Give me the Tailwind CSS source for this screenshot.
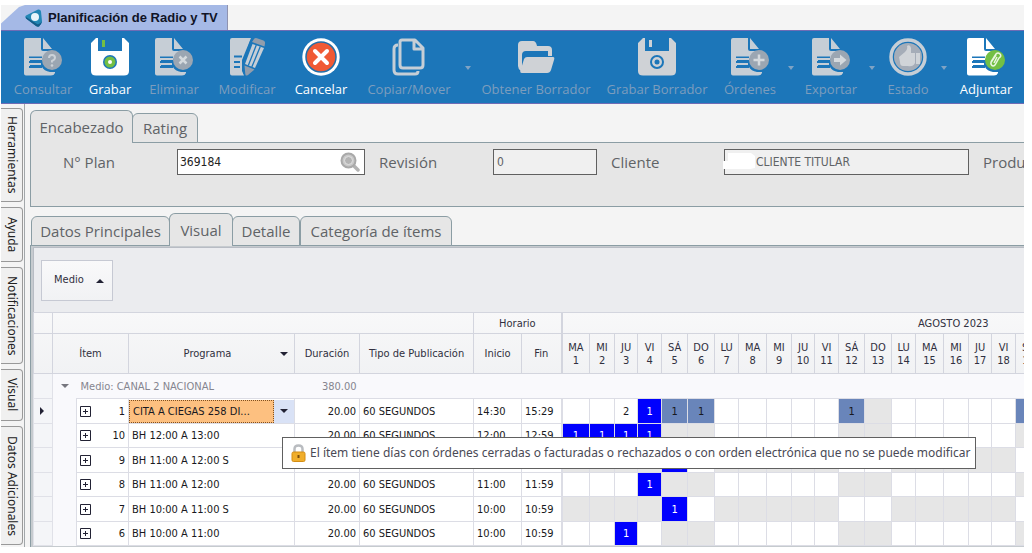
<!DOCTYPE html>
<html lang="es">
<head>
<meta charset="utf-8">
<title>Planificación de Radio y TV</title>
<script src="https://cdn.jsdelivr.net/npm/@tailwindcss/browser@4"></script>
</head>
<body class="bg-white overflow-hidden font-['Open_Sans','Noto_Sans',sans-serif]">
<svg class="hidden">
  <symbol id="doc" viewBox="0 0 38 38">
    <path fill="currentColor" d="M0 2Q0 0 2 0H17V11Q17 13 19 13H28V16Q18 19 18 22H6V24H17V27H6V29H18Q20 33 26 34H31V35Q30 37.500 27 37.500H2Q0 37.500 0 35.500ZM19 0 28 11H19Z"/>
    <path fill="#1c76b9" d="M5 18.500H18V20H5ZM5 23H17V25H5ZM5 28H18V30H5Z"/>
  </symbol>
</svg>
<div class="flex min-h-screen flex-col pt-[5px] pr-2 pb-1.5 pl-px">
  <nav class="flex h-[25px] shrink-0 bg-[#f4f4f4]" aria-label="Documentos">
    <button class="flex w-[227px] items-center gap-1.5 border-r border-[#8f93b0] bg-[#a5b9e6] pl-6 [clip-path:polygon(0_100%,0_74%,18px_8%,24px_0,100%_0,100%_100%)]">
      <svg class="h-[18px] w-[17px] shrink-0" viewBox="0 0 17 18"><path fill="#2387b5" d="M1 6.500 13 .5Q15.500 0 16 2.500L17 12Q17 14 16 15L14 17.500Q12.500 18 11 17L1 9.500Q-.5 8 1 6.500Z"/><path fill="#145b88" d="M1 8 12 15Q15 16 17 12L16 15 14 17.500Q12.500 18 11 17L1 9.500Z"/><circle cx="10" cy="8" r="4" fill="#e8f5fb"/></svg>
      <span class="font-['Liberation_Sans',sans-serif] text-[13px] leading-4 font-bold whitespace-nowrap text-[#101426]">Planificación de Radio y TV</span>
    </button>
  </nav>

  <div class="flex h-[74px] shrink-0 overflow-hidden border-y border-[#6f6cb5] bg-[#1c76b9] pt-[7px] pl-2 text-[13px] leading-[18px] whitespace-nowrap text-[#7c9dbd]" role="toolbar">
    <button class="flex w-[68px] shrink-0 flex-col items-center gap-1" disabled>
      <svg class="h-[38px] w-[38px] text-[#c6ced6]" viewBox="0 0 38 38"><use href="#doc" width="38" height="38"/><circle cx="28" cy="22" r="10" fill="#9ba6b2"/><path d="M25 20Q25 17 28 17T31 20Q31 21.500 28 23V24.500" fill="none" stroke="#ccd2d8" stroke-width="2"/><circle cx="28" cy="27.500" r="1.300" fill="#ccd2d8"/></svg>
      <span>Consultar</span></button>
    <button class="flex w-[66px] shrink-0 flex-col items-center gap-1 text-white">
      <svg class="h-[38px] w-[38px]" viewBox="0 0 38 38"><path fill="#fff" d="M5 0H7V13H31V0H33L38 5V33Q38 37.500 33 37.500H5Q0 37.500 0 33V5Z"/><path fill="#73bf44" d="M11 2H14V9H11Z"/><circle cx="19" cy="24" r="7" fill="#1c76b9"/><circle cx="19" cy="24" r="5.500" fill="#73bf44"/><circle cx="19" cy="24" r="2" fill="#fff"/></svg>
      <span>Grabar</span></button>
    <button class="flex w-[62px] shrink-0 flex-col items-center gap-1" disabled>
      <svg class="h-[38px] w-[38px] text-[#c6ced6]" viewBox="0 0 38 38"><use href="#doc" width="38" height="38"/><circle cx="28" cy="22" r="10" fill="#9ba6b2"/><path d="M24.500 18.500 31.500 25.500M31.500 18.500 24.500 25.500" stroke="#d5dade" stroke-width="2.500"/></svg>
      <span>Eliminar</span></button>
    <button class="flex w-[84px] shrink-0 flex-col items-center gap-1" disabled>
      <svg class="h-[38px] w-[38px]" viewBox="0 0 38 38"><path fill="#c6ced6" d="M2 2Q2 0 4 0H23L14 22V33L16 37.500H4Q2 37.500 2 35.500Z"/><path stroke="#1c76b9" stroke-width="2" d="M6 18.500H14M6 24H12M6 29H12"/><path fill="#1c76b9" d="M22 3 38 9 27 33 18 38 15 35 15 24Z"/><path fill="#c6ced6" d="M24.500 6 36 10 27 30 17 26Z"/><path stroke="#1c76b9" stroke-width="1.300" d="M28.300 7 20.300 27.500M32.300 8.500 23.800 29"/><path fill="#929dac" d="M24 4 26 1Q27-.3 29 .2L35.500 2.500Q37.500 3.500 37 5.500L36.500 8.500ZM16.500 27.500 26.500 31.500 20 37Q17.500 38.500 17.300 36Z"/></svg>
      <span>Modificar</span></button>
    <button class="flex w-[64px] shrink-0 flex-col items-center gap-1 text-white">
      <svg class="h-[38px] w-[38px]" viewBox="0 0 38 38"><circle cx="19" cy="19" r="18.700" fill="#fff"/><circle cx="19" cy="19" r="15" fill="#f05a35" stroke="#226ea9" stroke-width="1.500"/><path d="M13 13 25 25M25 13 13 25" stroke="#fff" stroke-width="4" stroke-linecap="round"/></svg>
      <span>Cancelar</span></button>
    <button class="flex w-[112px] shrink-0 flex-col items-center gap-1" disabled>
      <svg class="h-[38px] w-[38px]" viewBox="0 0 38 38" fill="none" stroke="#c6ced6" stroke-width="3" stroke-linejoin="round"><path d="M12 2H25L33 10V27Q33 30 30 30H13Q10 30 10 27V4Q10 2 12 2ZM24 2V11H33"/><path d="M8 7Q4 7 4 11V32Q4 36 8 36H25Q28 36 28 33"/></svg>
      <span>Copiar/Mover</span></button>
    <button class="flex w-1.5 shrink-0 justify-center pt-7" disabled aria-label="Opciones de copiar"><svg class="h-1 w-1.5 shrink-0" viewBox="0 0 6 4"><path fill="#7fa3c4" d="M0 0H6L3 4Z"/></svg></button>
    <button class="flex w-[130px] shrink-0 flex-col items-center gap-1" disabled>
      <svg class="h-[38px] w-[38px]" viewBox="0 0 38 38"><path fill="#cfd2d6" d="M1 7Q1 3 5 3H16Q19 3 20 8H31Q35 8 35 12V18H31V13H9Q5 13 5 17V30L4 33Q1 31 1 28Z"/><path fill="#cfd2d6" d="M10 19H36Q38 19 37 22L34 32Q33 35 30 35H5Q2 35 4 31L7 21Q8 19 10 19Z"/></svg>
      <span>Obtener Borrador</span></button>
    <button class="flex w-[112px] shrink-0 flex-col items-center gap-1" disabled>
      <svg class="h-[38px] w-[38px]" viewBox="0 0 38 38"><path fill="#cfd2d6" d="M5 0H7V13H31V0H33L38 5V33Q38 37.500 33 37.500H5Q0 37.500 0 33V5ZM11 2H14V9H11Z"/><circle cx="19" cy="24" r="6" fill="none" stroke="#1c76b9" stroke-width="2"/><circle cx="19" cy="24" r="2.500" fill="#1c76b9"/></svg>
      <span>Grabar Borrador</span></button>
    <button class="flex w-[74px] shrink-0 flex-col items-center gap-1" disabled>
      <svg class="h-[38px] w-[38px] text-[#c6ced6]" viewBox="0 0 38 38"><use href="#doc" width="38" height="38"/><circle cx="28" cy="22" r="10" fill="#9ba6b2"/><path d="M28 16.500V27.500M22.500 22H33.500" stroke="#d5dade" stroke-width="2.500"/></svg>
      <span>Órdenes</span></button>
    <button class="flex w-2 shrink-0 justify-center pt-7" disabled aria-label="Opciones de órdenes"><svg class="h-1 w-1.5 shrink-0" viewBox="0 0 6 4"><path fill="#7fa3c4" d="M0 0H6L3 4Z"/></svg></button>
    <button class="flex w-[72px] shrink-0 flex-col items-center gap-1" disabled>
      <svg class="h-[38px] w-[38px] text-[#c6ced6]" viewBox="0 0 38 38"><use href="#doc" width="38" height="38"/><circle cx="28" cy="22" r="10" fill="#9ba6b2"/><path fill="#d5dade" d="M22 20H28V16.500L34.500 22 28 27.500V24H22Z"/></svg>
      <span>Exportar</span></button>
    <button class="flex w-2.5 shrink-0 justify-center pt-7" disabled aria-label="Opciones de exportar"><svg class="h-1 w-1.5 shrink-0" viewBox="0 0 6 4"><path fill="#7fa3c4" d="M0 0H6L3 4Z"/></svg></button>
    <button class="flex w-[62px] shrink-0 flex-col items-center gap-1" disabled>
      <svg class="h-[38px] w-[38px]" viewBox="0 0 38 38"><circle cx="19" cy="19" r="17" fill="#1c76b9" stroke="#c6ced6" stroke-width="3.500"/><circle cx="19" cy="19" r="14" fill="#a5adb8"/><path fill="#d0d4d8" d="M10 19 16 14Q19 11 18 8 21 6 22 10V15H26V25Q24 29 19 28H14Q11 28 11 24ZM27 15H31V26H27Z"/></svg>
      <span>Estado</span></button>
    <button class="flex w-2.5 shrink-0 justify-center pt-7" disabled aria-label="Opciones de estado"><svg class="h-1 w-1.5 shrink-0" viewBox="0 0 6 4"><path fill="#7fa3c4" d="M0 0H6L3 4Z"/></svg></button>
    <button class="flex w-[74px] shrink-0 flex-col items-center gap-1 text-white">
      <svg class="h-[38px] w-[38px]" viewBox="0 0 38 38"><use href="#doc" width="38" height="38"/><circle cx="28" cy="22" r="10" fill="#73bf44"/><path d="M24 24 29 16Q31 14 33 16T32 20L28 27Q26 29 24.500 27T25 23L29 17M27 25 30 19" fill="none" stroke="#e9f6df" stroke-width="1.500"/></svg>
      <span>Adjuntar</span></button>
  </div>

  <div class="flex grow bg-[#f4f4f4]">
    <nav class="flex w-6 shrink-0 flex-col gap-[5px] border-r border-[#a2a7aa] pt-1 font-['Noto_Sans',sans-serif] text-[12px] text-[#222]" aria-label="Paneles">
      <button class="flex h-[94px] w-[22px] items-center justify-center rounded-r border border-l-0 border-[#999] bg-[#f0f0f0]"><span class="[writing-mode:vertical-rl]">Herramientas</span></button>
      <button class="flex h-[55px] w-[22px] items-center justify-center rounded-r border border-l-0 border-[#999] bg-[#f0f0f0]"><span class="[writing-mode:vertical-rl]">Ayuda</span></button>
      <button class="flex h-[97px] w-[22px] items-center justify-center rounded-r border border-l-0 border-[#999] bg-[#f0f0f0]"><span class="[writing-mode:vertical-rl]">Notificaciones</span></button>
      <button class="flex h-[52px] w-[22px] items-center justify-center rounded-r border border-l-0 border-[#999] bg-[#f0f0f0]"><span class="[writing-mode:vertical-rl]">Visual</span></button>
      <button class="flex h-[119px] w-[22px] items-center justify-center rounded-r border border-l-0 border-[#999] bg-[#f0f0f0]"><span class="[writing-mode:vertical-rl]">Datos Adicionales</span></button>
    </nav>

    <main class="flex w-0 grow flex-col overflow-hidden pt-1.5 pl-[5px] text-[15px] text-[#606366]">
      <div class="relative z-10 -mb-px flex h-[33px] items-end leading-5" role="tablist">
        <button role="tab" aria-selected="true" class="h-[33px] w-[103px] rounded-t-md border border-b-0 border-[#8b9da4] bg-[#e6e6e6] text-center">Encabezado</button>
        <button role="tab" class="-ml-px h-[30px] w-[66px] rounded-t-md border border-[#8b9da4] bg-[#e6e6e6] text-center">Rating</button>
      </div>
      <form class="flex h-[65px] overflow-hidden border-y border-l border-[#8b9da4] bg-[#e6e6e6] pt-1.5 pl-8 leading-[26px] whitespace-nowrap">
        <label for="plan" class="w-[114px] shrink-0">N° Plan</label>
        <div class="mr-3.5 flex h-[26px] w-[188px] shrink-0 items-center border border-[#606060] bg-white pr-1">
          <input id="plan" value="369184" class="w-0 grow pl-0.5 font-['DejaVu_Sans_Condensed','DejaVu_Sans',sans-serif] text-[12px] text-[#222]">
          <svg class="size-5 shrink-0" viewBox="0 0 20 20"><path stroke="#b3b3b3" stroke-width="3.500" stroke-linecap="round" d="M13 13 18 18"/><circle cx="8.500" cy="8.500" r="7" fill="#c9c9c9" stroke="#a9a9a9" stroke-width="2"/><circle cx="8.500" cy="8.500" r="4" fill="#b4b4b4" stroke="#e1e1e1"/></svg>
        </div>
        <label for="rev" class="w-[114px] shrink-0">Revisión</label>
        <input id="rev" value="0" readonly class="mr-3.5 h-[26px] w-[104px] shrink-0 border border-[#606060] bg-[#f0f0f0] pl-[3px] font-['DejaVu_Sans_Condensed','DejaVu_Sans',sans-serif] text-[12px]">
        <label for="cli" class="w-[113px] shrink-0">Cliente</label>
        <div class="relative mr-3.5 h-[26px] w-[245px] shrink-0">
          <input id="cli" value="CLIENTE TITULAR" readonly class="block h-full w-full border border-[#606060] bg-[#f0f0f0] pl-[31px] font-['DejaVu_Sans_Condensed','DejaVu_Sans',sans-serif] text-[12px]">
          <span class="absolute top-1 -left-px h-4 w-8 bg-white [clip-path:polygon(5px_0,28px_0,100%_3px,100%_15px,27px_100%,0_100%,0_8px,5px_8px)]"></span>
        </div>
        <span class="shrink-0">Producto</span>
      </form>

      <div class="relative z-10 mt-1.5 -mb-px flex h-[33px] items-end pl-px leading-5" role="tablist">
        <button role="tab" class="h-[30px] w-[139px] rounded-t-md border border-[#8b9da4] bg-[#e6e6e6]">Datos Principales</button>
        <button role="tab" aria-selected="true" class="-ml-px h-[33px] w-[64px] rounded-t-md border border-b-0 border-[#8b9da4] bg-[#e6e6e6]">Visual</button>
        <button role="tab" class="-ml-px h-[30px] w-[68px] rounded-t-md border border-[#8b9da4] bg-[#e6e6e6]">Detalle</button>
        <button role="tab" class="h-[30px] w-[152px] rounded-t-md border border-[#8b9da4] bg-[#e6e6e6]">Categoría de ítems</button>
      </div>
      <section class="relative flex grow flex-col border-t border-l border-[#8b9da4] bg-[#c6cbcf] pt-px pl-0.5">
        <div class="h-[65px] shrink-0 border-t border-l border-[#b8bcc4] bg-[#ebecef] pt-3 pl-[7px]">
          <button class="flex h-[41px] w-[72px] items-center justify-between border border-[#c6c9d3] bg-linear-to-b from-[#f9f9fa] to-[#f1f2f4] pr-2 pl-3 font-['DejaVu_Sans_Condensed','DejaVu_Sans',sans-serif] text-[11px] text-[#303040]">Medio<svg class="h-1 w-2" viewBox="0 0 8 4"><path fill="#222234" d="M0 4H8L4 0Z"/></svg></button>
        </div>
        <table class="w-[1312px] table-fixed border-collapse bg-white font-['DejaVu_Sans_Condensed','DejaVu_Sans',sans-serif] text-[11px] leading-[13px] whitespace-nowrap text-[#181820]">
          <colgroup id="cols"><col class="w-[19px]"><col class="w-6"><col class="w-[52px]"><col class="w-[166px]"><col class="w-[65px]"><col class="w-[114px]"><col class="w-12"><col class="w-10"></colgroup>
          <thead class="bg-linear-to-b from-[#f8f8f9] to-[#f1f2f4] text-[#303040]">
            <tr class="h-[21px]">
              <th class="border border-[#d3d5de]"></th><th colspan="5" class="border border-[#d3d5de]"></th>
              <th colspan="2" class="border border-r-2 border-[#d3d5de] font-normal">Horario</th>
              <th colspan="20" class="border border-[#d3d5de] font-normal">AGOSTO 2023</th>
            </tr>
            <tr class="h-10" id="days">
              <th class="border border-[#d3d5de]"></th>
              <th colspan="2" class="border border-[#d3d5de] font-normal">Ítem</th>
              <th class="border border-[#d3d5de] px-1.5 font-normal"><div class="flex items-center"><span class="grow">Programa</span><svg class="h-1 w-2" viewBox="0 0 8 4"><path fill="#222234" d="M0 0H8L4 4Z"/></svg></div></th>
              <th class="border border-[#d3d5de] font-normal">Duración</th>
              <th class="border border-[#d3d5de] font-normal">Tipo de Publicación</th>
              <th class="border border-[#d3d5de] font-normal">Inicio</th>
              <th class="border border-r-2 border-[#d3d5de] font-normal">Fin</th>
            </tr>
          </thead>
          <tbody id="rows">
            <tr class="h-[25px] bg-[#f9f9fc] text-[#85858f]">
              <td class="border border-[#e0e1e8] bg-[#f4f5f8]"></td>
              <td class="pl-2"><svg class="h-1 w-2" viewBox="0 0 8 4"><path fill="#77777f" d="M0 0H8L4 4Z"/></svg></td>
              <td colspan="2" class="pl-1">Medio: CANAL 2 NACIONAL</td>
              <td class="pr-[3px] text-right">380.00</td>
              <td colspan="23"></td>
            </tr>
          </tbody>
        </table>
        <div role="tooltip" class="absolute top-[191px] left-[251px] z-10 flex h-8 w-[694px] items-center gap-1 border border-[#606060] bg-white pl-2 font-['Noto_Sans',sans-serif] text-[12px] whitespace-nowrap text-[#4a4a55]">
          <svg class="h-[18px] w-[15px] shrink-0" viewBox="0 0 15 18"><path fill="none" stroke="#b9bcc0" stroke-width="2.500" d="M3.500 9V5Q3.500 1.500 7.500 1.500T11.500 5V9"/><rect x="1" y="8" width="13" height="9.500" rx="1.500" fill="#f0ae2c" stroke="#d48d13"/><path fill="#7b4d0c" d="M6.500 11H8.500V14H6.500Z"/></svg>
          <span>El ítem tiene días con órdenes cerradas o facturadas o rechazados o con orden electrónica que no se puede modificar</span>
        </div>
      </section>
    </main>
  </div>
</div>
<script>
const dayNames = ['MA', 'MI', 'JU', 'VI', 'SÁ', 'DO', 'LU'];
const dayWidths = ['w-7', 'w-[25px]', 'w-[23px]', 'w-6', 'w-[26px]', 'w-[27px]', 'w-6'];
let cols = '', heads = '';
for (let d = 0; d < 19; d++) {
  cols += `<col class="${dayWidths[d % 7]}">`;
  heads += `<th class="border border-[#d3d5de] p-0 font-normal">${dayNames[d % 7]}<br>${d + 1}</th>`;
}
document.getElementById('cols').insertAdjacentHTML('beforeend', cols + '<col>');
document.getElementById('days').insertAdjacentHTML('beforeend', heads + '<th></th>');

// w: free, g: unavailable, 2: two spots, B: one spot, S: one closed spot
const fill = {
  w: ['bg-white', ''], g: ['bg-[#e6e6e6]', ''], 2: ['bg-white', '2'],
  B: ['bg-[#0000fe] text-white', '1'], S: ['bg-[#6985ba]', '1']
};
const items = [
  [1, 'CITA A CIEGAS 258 DI...', '14:30', '15:29', 'ww2BSSwwwwwSgwwwwwS'],
  [10, 'BH 12:00 A 13:00', '12:00', '12:59', 'BBBBggwwwwwggwwwwwg'],
  [9, 'BH 11:00 A 12:00 S', '11:00', '11:59', 'ggggBwgggggwwgggggw'],
  [8, 'BH 11:00 A 12:00', '11:00', '11:59', 'wwwBggwwwwwggwwwwwg'],
  [7, 'BH 10:00 A 11:00 S', '10:00', '10:59', 'ggggBwgggggwwgggggw'],
  [6, 'BH 10:00 A 11:00', '10:00', '10:59', 'wwBwggwwwwwggwwwwwg']
];
document.getElementById('rows').insertAdjacentHTML('beforeend', items.map(([n, name, from, to, days], i) => `
<tr class="${i % 2 ? 'h-6' : 'h-[25px]'} bg-white">
  <td class="border border-[#e0e1e8] bg-[#f4f5f8] pl-1.5">${i ? '' : '<svg class="h-2 w-1" viewBox="0 0 4 8"><path fill="#222234" d="M0 0V8L4 4Z"/></svg>'}</td>
  <td class="bg-[#f9f9fc]"></td>
  <td class="border border-[#dcdde5] px-[3px]"><div class="flex items-center justify-between"><button aria-label="Expandir"><svg class="size-[11px]" viewBox="0 0 11 11"><path fill="none" stroke="#222234" d="M.5.5H10.500V10.500H.5ZM3 5.500H8M5.500 3V8"/></svg></button>${n}</div></td>
  ${i ? `<td class="border border-[#dcdde5] pl-[3px]">${name}</td>` : `<td class="border border-[#dcdde5] p-0"><div class="flex h-[23px] items-center"><span class="flex h-full grow items-center border border-dotted border-[#805020] bg-[#fdc080] pl-[3px]">${name}</span><button aria-label="Elegir programa" class="flex h-full w-5 items-center justify-center bg-[#d9e2f6]"><svg class="h-1 w-2" viewBox="0 0 8 4"><path fill="#222234" d="M0 0H8L4 4Z"/></svg></button></div></td>`}
  <td class="border border-[#dcdde5] pr-[3px] text-right">20.00</td>
  <td class="border border-[#dcdde5] pl-[3px]">60 SEGUNDOS</td>
  <td class="border border-[#dcdde5] pl-[3px]">${from}</td>
  <td class="border border-r-2 border-[#dcdde5] pl-[3px]">${to}</td>
  ${[...days].map(c => `<td class="border border-[#dcdde5] p-0 text-center ${fill[c][0]}">${fill[c][1]}</td>`).join('')}<td></td>
</tr>`).join(''));
</script>
</body>
</html>
